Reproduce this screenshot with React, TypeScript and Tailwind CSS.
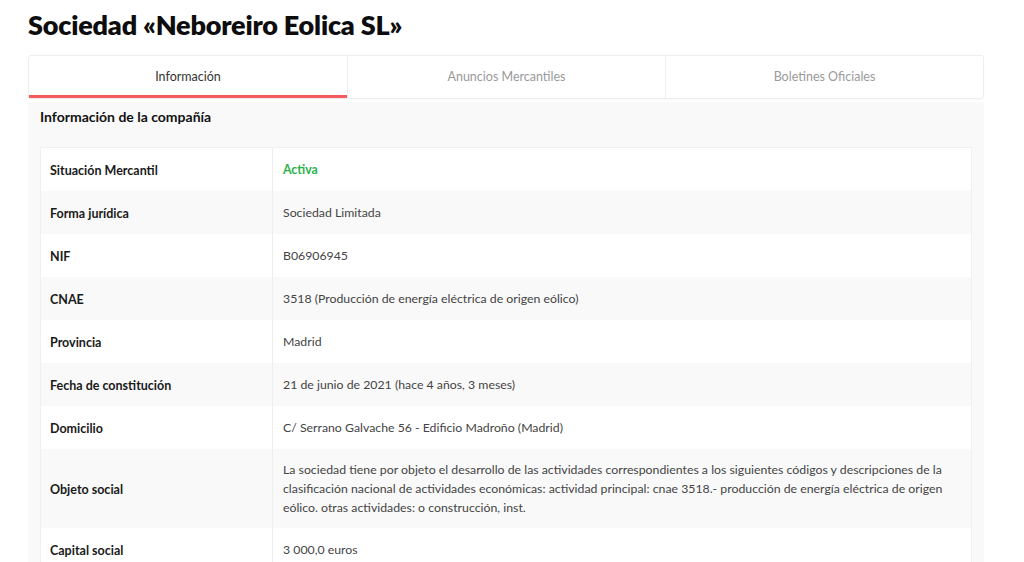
import React from "react";

const rows: { label: string; value: React.ReactNode }[] = [
  { label: "Situación Mercantil", value: <span className="font-bold text-[#2bb24c]">Activa</span> },
  { label: "Forma jurídica", value: "Sociedad Limitada" },
  { label: "NIF", value: "B06906945" },
  { label: "CNAE", value: "3518 (Producción de energía eléctrica de origen eólico)" },
  { label: "Provincia", value: "Madrid" },
  { label: "Fecha de constitución", value: "21 de junio de 2021 (hace 4 años, 3 meses)" },
  { label: "Domicilio", value: "C/ Serrano Galvache 56 - Edificio Madroño (Madrid)" },
  {
    label: "Objeto social",
    value:
      "La sociedad tiene por objeto el desarrollo de las actividades correspondientes a los siguientes códigos y descripciones de la clasificación nacional de actividades económicas: actividad principal: cnae 3518.- producción de energía eléctrica de origen eólico. otras actividades: o construcción, inst.",
  },
  { label: "Capital social", value: "3 000,0 euros" },
];

const tabs = ["Información", "Anuncios Mercantiles", "Boletines Oficiales"];

export default function App() {
  return (
    <div className="min-h-screen bg-white px-[28px] pt-[8px] font-['Lato','Noto_Sans',sans-serif] text-[#222]">
      <h1 className="text-[27px] font-extrabold leading-[34px] tracking-[-0.2px] text-[#0d0d0d]">
        Sociedad «Neboreiro Eolica SL»
      </h1>

      {/* tabs */}
      <div className="mt-[13px] grid h-[44px] w-[956px] grid-cols-3 rounded-[3px] border border-[#eceef2] shadow-[0_1px_2px_rgba(0,0,0,0.03)]">
        {tabs.map((t, i) => (
          <div
            key={t}
            className={`flex items-center justify-center text-[12.5px] ${
              i === 0
                ? "border-b-[3px] border-[#f65a5a] pt-[3px] text-[#333]"
                : "border-l border-[#eceef2] text-[#9a9a9a]"
            }`}
          >
            {t}
          </div>
        ))}
      </div>

      {/* panel */}
      <div className="mt-[3px] w-[956px] bg-[#f9f9f9] px-[12px] pt-[4px] pb-[20px]">
        <h2 className="text-[14px] font-bold leading-[22px] text-[#111]">
          Información de la compañía
        </h2>
        <div className="mt-[19px] border border-[#f0f0f0] bg-white">
          {rows.map((r, i) => (
            <div
              key={r.label}
              className={`flex ${i % 2 === 1 ? "bg-[#f9f9f9]" : "bg-white"}`}
            >
              <div className="flex w-[232px] shrink-0 items-center border-r border-[#eeeeee] pl-[9px] pt-[1px] text-[12.5px] font-bold leading-[19px] text-[#1a1a1a]">
                {r.label}
              </div>
              <div className="flex min-h-[43px] flex-1 items-center py-[11px] pl-[10px] pr-[16px] text-[12.3px] leading-[19px] text-[#444]">
                <span>{r.value}</span>
              </div>
            </div>
          ))}
        </div>
      </div>
    </div>
  );
}
